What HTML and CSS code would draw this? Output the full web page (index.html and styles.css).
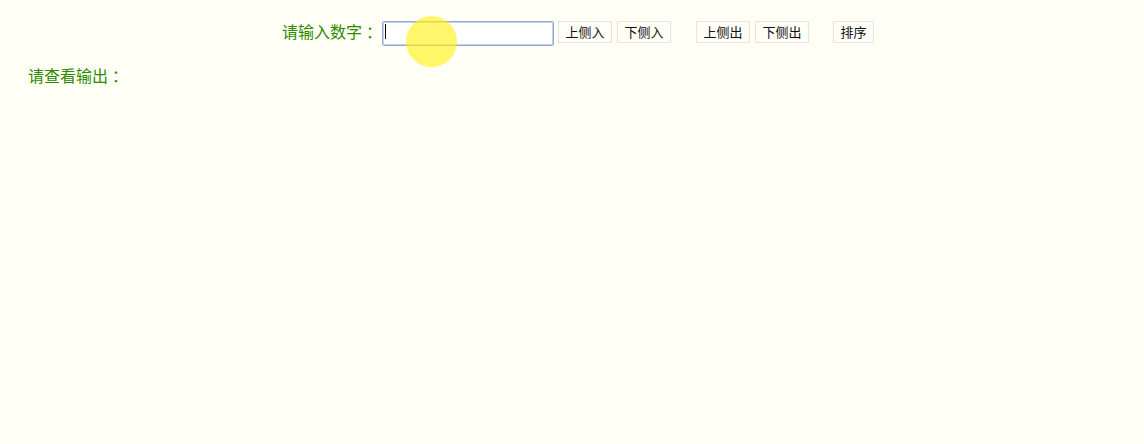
FILE: index.html
```html
<!DOCTYPE html>
<html lang="zh">
<head>
<meta charset="utf-8">
<title>队列</title>
<link rel="stylesheet" href="styles.css">
</head>
<body>
<div class="controls">
  <label class="label" for="num">请输入数字<span class="colon">：</span></label>
  <span class="field">
    <input id="num" class="input" type="text">
    <span class="caret"></span>
  </span>
  <div class="group">
    <button class="btn">上侧入</button>
    <button class="btn">下侧入</button>
  </div>
  <div class="group">
    <button class="btn">上侧出</button>
    <button class="btn">下侧出</button>
  </div>
  <div class="group">
    <button class="btn">排序</button>
  </div>
</div>
<div class="output">请查看输出<span class="colon">：</span></div>
<div class="cursor-dot"></div>
</body>
</html>
```
FILE: styles.css
```css
html, body {
  margin: 0;
  padding: 0;
  background: #fffff5;
  font-family: "Noto Sans CJK SC", "Noto Sans", sans-serif;
  text-spacing-trim: space-all;
}

body {
  position: relative;
  width: 1144px;
  height: 444px;
  overflow: hidden;
}

.colon {
  display: inline-block;
  width: 1em;
  padding-left: 4px;
  box-sizing: border-box;
  text-align: left;
  white-space: nowrap;
  overflow: visible;
}

.controls {
  display: flex;
  align-items: center;
  padding: 19px 0 0 282px;
  height: 25px;
}

.label {
  font-size: 16px;
  line-height: 25px;
  color: #2e8a00;
  margin-right: 4px;
}

.field {
  position: relative;
  display: block;
  width: 172px;
  height: 25px;
  margin-right: 4px;
}

.input {
  box-sizing: border-box;
  width: 172px;
  height: 25px;
  margin: 0;
  padding: 0 3px;
  border: 1px solid #98a8d0;
  border-radius: 2px;
  background: #ffffff;
  outline: 1px solid #c4d2ec;
  outline-offset: -2px;
}

.caret {
  position: absolute;
  left: 3px;
  top: 5px;
  width: 1px;
  height: 15px;
  background: #000;
}

.group {
  display: flex;
  gap: 5px;
  margin-right: 25px;
}

.group:nth-child(4) {
  margin-right: 24px;
}

.group:last-child {
  margin-right: 0;
}

.btn {
  box-sizing: border-box;
  height: 22px;
  margin: 0;
  padding: 0 6.5px;
  border: 1px solid #e6e6dc;
  border-radius: 0;
  background: #fffff8;
  font-family: "Noto Sans CJK SC", "Noto Sans", sans-serif;
  font-size: 13px;
  line-height: 20px;
  color: #111;
}

.output {
  margin: 19px 0 0 28px;
  font-size: 16px;
  line-height: 24px;
  color: #2e8a00;
}

.cursor-dot {
  position: absolute;
  left: 406px;
  top: 16px;
  width: 51px;
  height: 51px;
  border-radius: 50%;
  background: rgba(255, 242, 30, 0.66);
}
```
